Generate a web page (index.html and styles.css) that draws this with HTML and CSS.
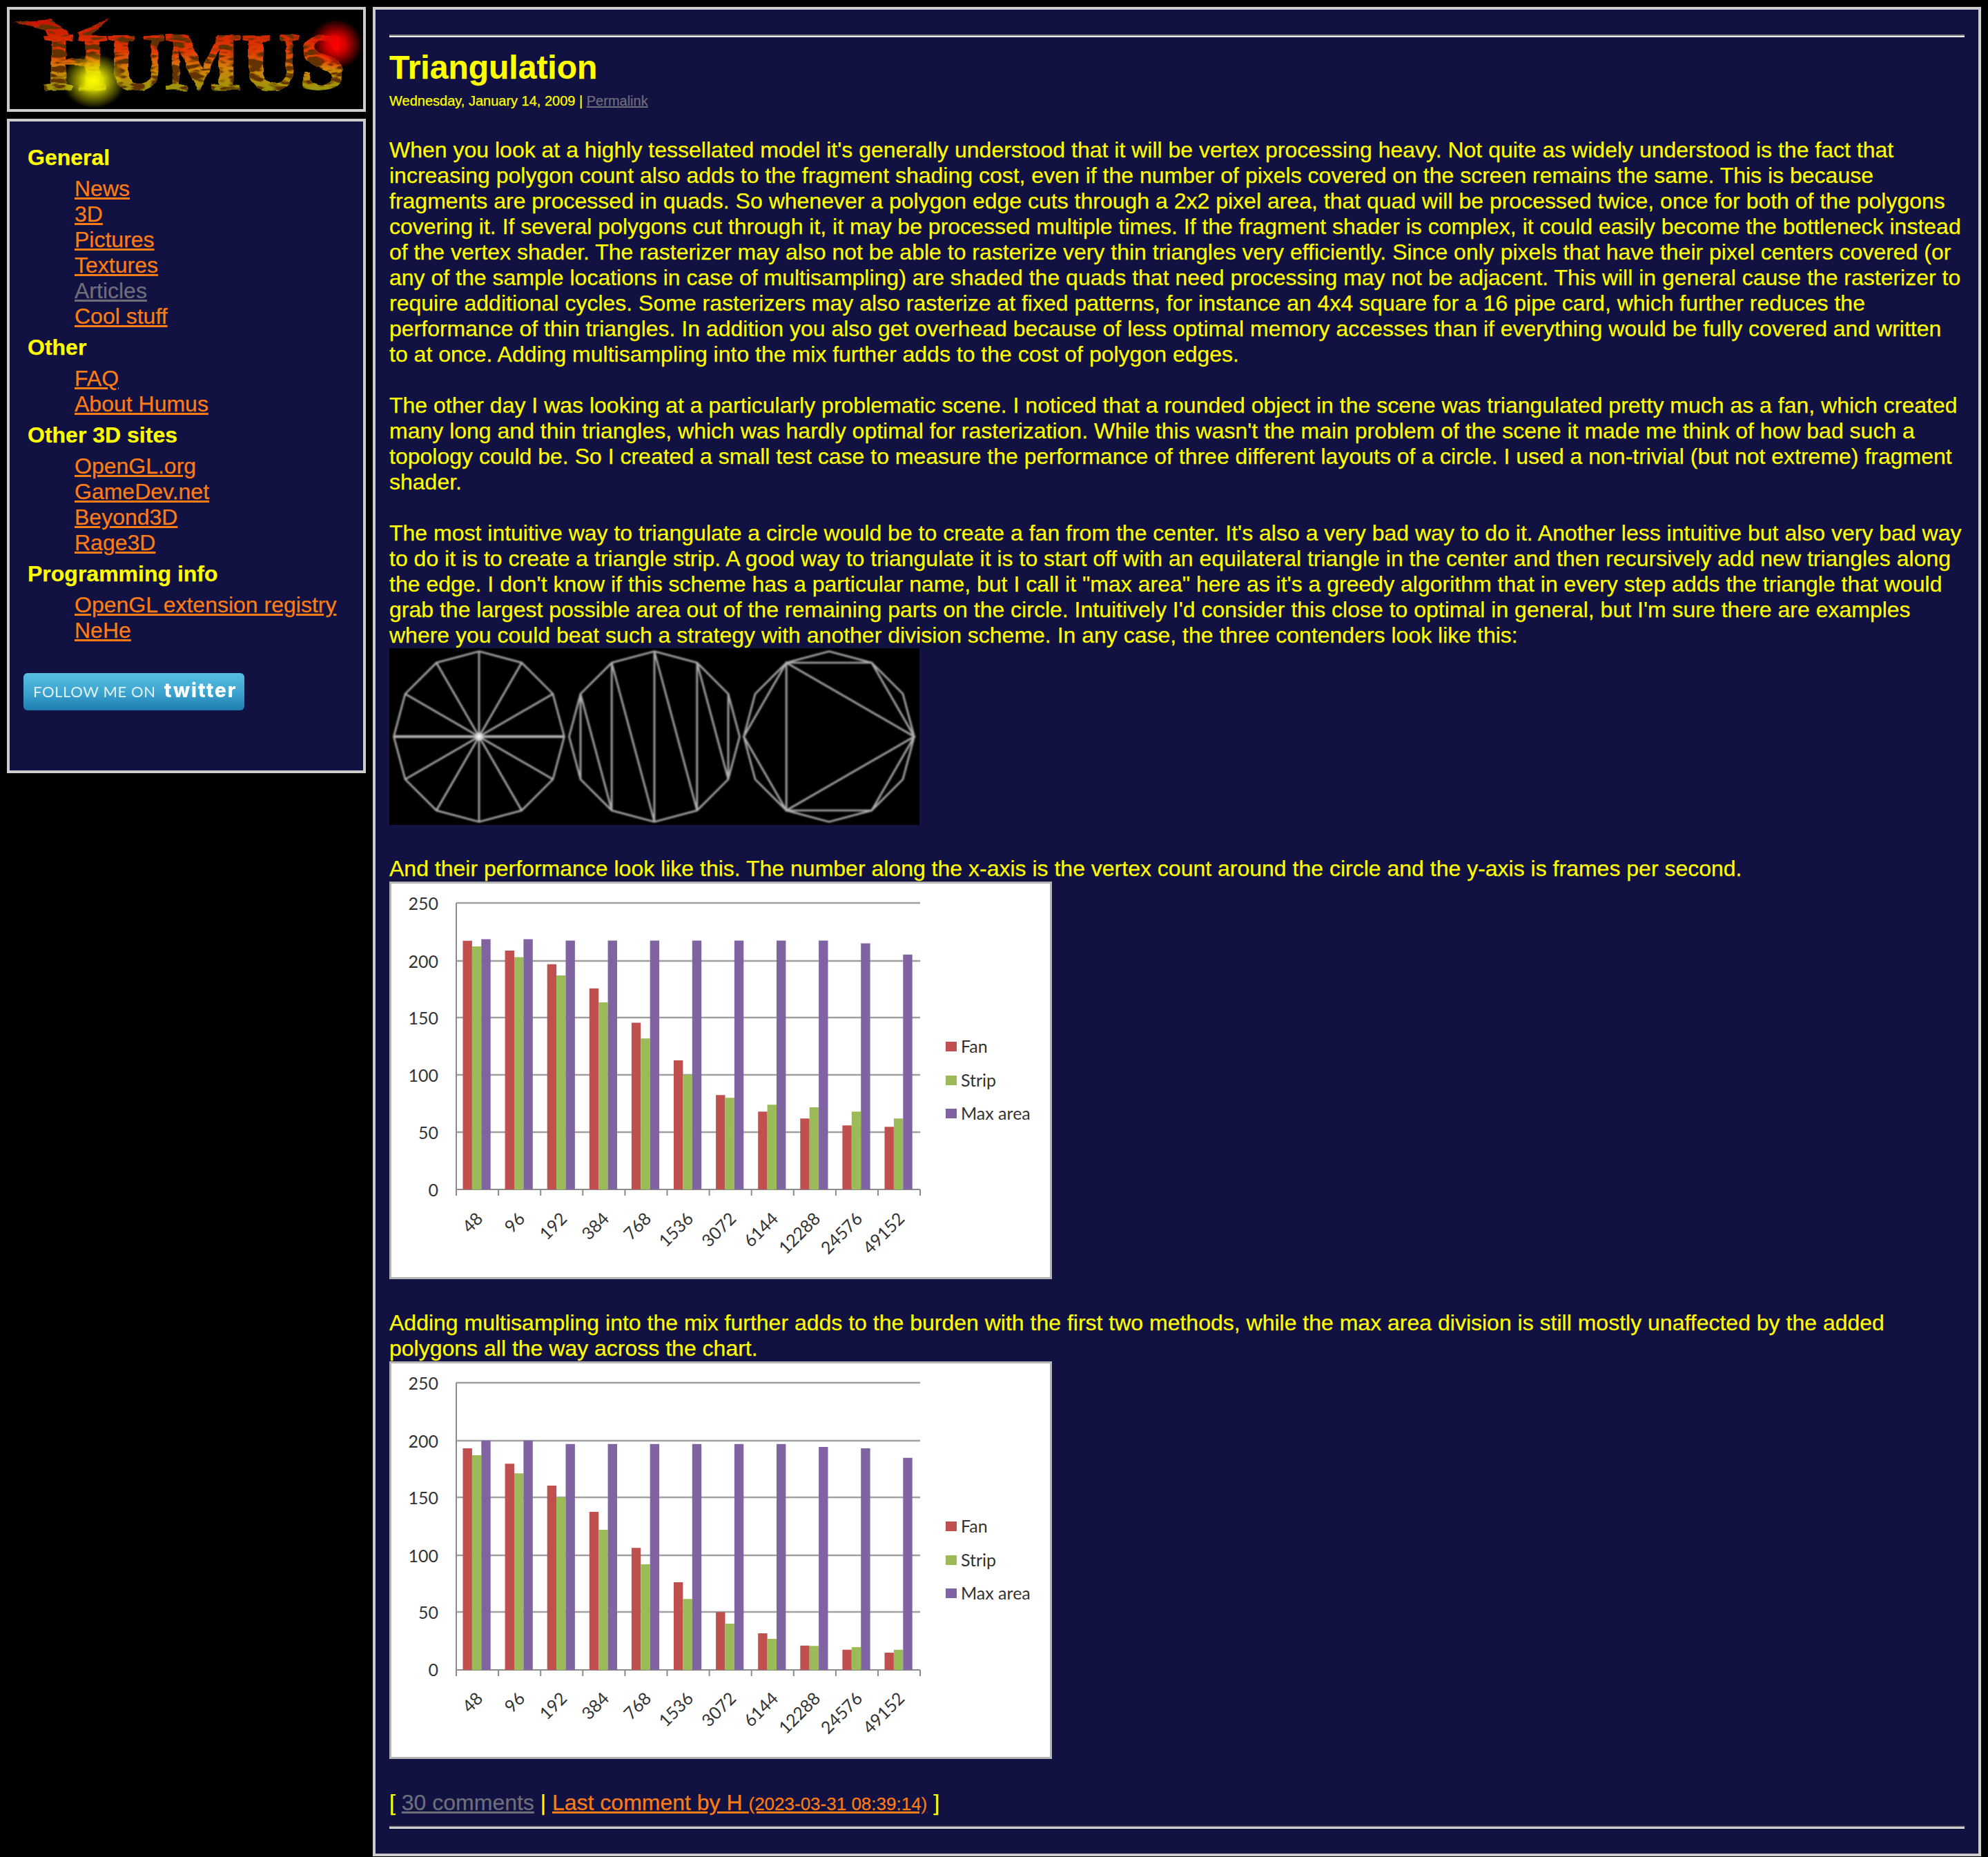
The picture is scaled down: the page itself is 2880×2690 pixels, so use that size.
FILE: index.html
```html
<!DOCTYPE html>
<html lang="en">
<head>
<meta charset="utf-8">
<title>Humus - Triangulation</title>
<link rel="stylesheet" href="styles.css">
</head>
<body>
<div class="page">
  <aside class="side">
    <div class="box logo-box">
      <svg class="logo" viewBox="0 0 512 144" role="img" aria-label="Humus">
        <defs>
          <linearGradient id="logoFill" gradientUnits="userSpaceOnUse" x1="0" y1="20" x2="0" y2="122">
            <stop offset="0" stop-color="#c81804"/>
            <stop offset=".4" stop-color="#e23c06"/>
            <stop offset=".65" stop-color="#d48408"/>
            <stop offset="1" stop-color="#8c9a10"/>
          </linearGradient>
          <radialGradient id="glowRed">
            <stop offset="0" stop-color="#ff0000"/>
            <stop offset=".35" stop-color="#f80000" stop-opacity=".85"/>
            <stop offset="1" stop-color="#ff0000" stop-opacity="0"/>
          </radialGradient>
          <radialGradient id="glowYellow">
            <stop offset="0" stop-color="#ffff00"/>
            <stop offset=".28" stop-color="#f4f400" stop-opacity=".9"/>
            <stop offset="1" stop-color="#e8e800" stop-opacity="0"/>
          </radialGradient>
          <filter id="rough" x="-5%" y="-15%" width="110%" height="130%">
            <feTurbulence type="fractalNoise" baseFrequency=".04 .07" numOctaves="3" seed="7" result="n"/>
            <feDisplacementMap in="SourceGraphic" in2="n" scale="6" xChannelSelector="R" yChannelSelector="G" result="d"/>
            <feTurbulence type="turbulence" baseFrequency=".035 .1" numOctaves="2" seed="3" result="v"/>
            <feColorMatrix in="v" type="matrix" values="0 0 0 0 .12  0 0 0 0 .03  0 0 0 0 0  5 0 0 0 -.85" result="veins"/>
            <feComposite in="veins" in2="d" operator="in" result="dark"/>
            <feMerge><feMergeNode in="d"/><feMergeNode in="dark"/></feMerge>
          </filter>
        </defs>
        <rect width="512" height="144" fill="#000"/>
        <g filter="url(#rough)">
          <path d="M5 18 60 14 82 32 92 46 60 46 52 30Z" fill="url(#logoFill)"/>
          <path d="M143 13 110 46 98 34Z" fill="url(#logoFill)"/>
          <text class="logo-text" x="50" y="115" fill="url(#logoFill)" stroke="url(#logoFill)">HUMUS</text>
        </g>
        <ellipse cx="473" cy="50" rx="38" ry="36" fill="url(#glowRed)"/>
        <ellipse cx="122" cy="103" rx="46" ry="40" fill="url(#glowYellow)"/>
      </svg>
    </div>
    <nav class="box nav">
      <h2 class="nav-head">General</h2>
      <ul class="nav-list">
        <li><a href="#news">News</a></li>
        <li><a href="#3d">3D</a></li>
        <li><a href="#pictures">Pictures</a></li>
        <li><a href="#textures">Textures</a></li>
        <li><a class="seen" href="#articles">Articles</a></li>
        <li><a href="#cool">Cool stuff</a></li>
      </ul>
      <h2 class="nav-head">Other</h2>
      <ul class="nav-list">
        <li><a href="#faq">FAQ</a></li>
        <li><a href="#about">About Humus</a></li>
      </ul>
      <h2 class="nav-head">Other 3D sites</h2>
      <ul class="nav-list">
        <li><a href="#opengl">OpenGL.org</a></li>
        <li><a href="#gamedev">GameDev.net</a></li>
        <li><a href="#beyond3d">Beyond3D</a></li>
        <li><a href="#rage3d">Rage3D</a></li>
      </ul>
      <h2 class="nav-head">Programming info</h2>
      <ul class="nav-list">
        <li><a href="#registry">OpenGL extension registry</a></li>
        <li><a href="#nehe">NeHe</a></li>
      </ul>
      <a class="twitter" href="#twitter"><span class="tw-follow">FOLLOW ME ON</span><span class="tw-name">twitter</span></a>
    </nav>
  </aside>

  <main class="box article">
    <hr class="rule">
    <h1 class="title">Triangulation</h1>
    <div class="meta">Wednesday, January 14, 2009 | <a class="seen" href="#permalink">Permalink</a></div>
    <div class="body-text">
      When you look at a highly tessellated model it's generally understood that it will be vertex processing heavy. Not quite as widely understood is the fact that increasing polygon count also adds to the fragment shading cost, even if the number of pixels covered on the screen remains the same. This is because fragments are processed in quads. So whenever a polygon edge cuts through a 2x2 pixel area, that quad will be processed twice, once for both of the polygons covering it. If several polygons cut through it, it may be processed multiple times. If the fragment shader is complex, it could easily become the bottleneck instead of the vertex shader. The rasterizer may also not be able to rasterize very thin triangles very efficiently. Since only pixels that have their pixel centers covered (or any of the sample locations in case of multisampling) are shaded the quads that need processing may not be adjacent. This will in general cause the rasterizer to require additional cycles. Some rasterizers may also rasterize at fixed patterns, for instance an 4x4 square for a 16 pipe card, which further reduces the performance of thin triangles. In addition you also get overhead because of less optimal memory accesses than if everything would be fully covered and written to at once. Adding multisampling into the mix further adds to the cost of polygon edges.<br><br>
      The other day I was looking at a particularly problematic scene. I noticed that a rounded object in the scene was triangulated pretty much as a fan, which created many long and thin triangles, which was hardly optimal for rasterization. While this wasn't the main problem of the scene it made me think of how bad such a topology could be. So I created a small test case to measure the performance of three different layouts of a circle. I used a non-trivial (but not extreme) fragment shader.<br><br>
      The most intuitive way to triangulate a circle would be to create a fan from the center. It's also a very bad way to do it. Another less intuitive but also very bad way to do it is to create a triangle strip. A good way to triangulate it is to start off with an equilateral triangle in the center and then recursively add new triangles along the edge. I don't know if this scheme has a particular name, but I call it "max area" here as it's a greedy algorithm that in every step adds the triangle that would grab the largest possible area out of the remaining parts on the circle. Intuitively I'd consider this close to optimal in general, but I'm sure there are examples where you could beat such a strategy with another division scheme. In any case, the three contenders look like this:<br>
      <svg class="figure wire" viewBox="0 0 768 256" role="img" aria-label="Fan, strip and max area triangulations of a circle">
        <defs>
          <polygon id="gon" points="0,-123.5 61.8,-107 107,-61.8 123.5,0 107,61.8 61.8,107 0,123.5 -61.8,107 -107,61.8 -123.5,0 -107,-61.8 -61.8,-107"/>
          <filter id="soft" x="-2%" y="-2%" width="104%" height="104%"><feGaussianBlur stdDeviation=".8"/></filter>
          <radialGradient id="hub"><stop offset="0" stop-color="#fff"/><stop offset="1" stop-color="#fff" stop-opacity="0"/></radialGradient>
        </defs>
        <rect width="768" height="256" fill="#000"/>
        <g class="wire-lines" filter="url(#soft)">
          <g transform="translate(130 128)">
            <use href="#gon"/>
            <path d="M0-123.5V123.5M61.8-107-61.8 107M107-61.8-107 61.8M123.5 0H-123.5M107 61.8-107-61.8M61.8 107-61.8-107"/>
            <path class="wire-bold" d="M123.5 0H-123.5"/>
          </g>
          <g transform="translate(384 128)">
            <use href="#gon"/>
            <path d="M107-61.8V61.8L61.8-107V107L0-123.5V123.5L-61.8-107V107L-107-61.8V61.8"/>
          </g>
          <g transform="translate(637 128)">
            <use href="#gon"/>
            <path d="M-61.8-107V107L123.5 0ZM-61.8-107H61.8L123.5 0L61.8 107H-61.8L-123.5 0Z"/>
          </g>
        </g>
        <circle cx="130" cy="128" r="7" fill="url(#hub)"/>
      </svg><br><br>
      And their performance look like this. The number along the x-axis is the vertex count around the circle and the y-axis is frames per second.<br>
      <svg class="figure chart" viewBox="0 0 960 576" role="img" aria-label="Frames per second without multisampling">
        <rect class="chart-frame" x="1.500" y="1.500" width="957" height="573"/>
        <path class="grid" d="M97 31H769M97 115H769M97 197H769M97 280H769M97 363H769"/>
        <path class="axis" d="M97 31V446H769M97 446v9M158.100 446v9M219.200 446v9M280.300 446v9M341.400 446v9M402.500 446v9M463.600 446v9M524.700 446v9M585.800 446v9M646.900 446v9M708 446v9M769 446v9"/>
        <path class="bar fan" d="M113.200 446V85.800M174.300 446V99.900M235.400 446V119.800M296.500 446V154.700M357.600 446V204.500M418.700 446V258.900M479.800 446V309.200M540.900 446V333.300M602 446V343.200M663.100 446V353.200M724.200 446V355.200"/>
        <path class="bar strip" d="M126.600 446V94.100M187.700 446V109.500M248.800 446V135.900M309.900 446V175.100M371 446V227.200M432.100 446V280M493.200 446V313.200M554.300 446V323.200M615.400 446V327.100M676.500 446V333.300M737.600 446V343.200"/>
        <path class="bar maxarea" d="M140 446V83.500M201.100 446V83.500M262.200 446V85.400M323.300 446V85.400M384.400 446V85.400M445.500 446V85.400M506.600 446V85.400M567.700 446V85.400M628.800 446V85.400M689.900 446V89.600M751 446V105.700"/>
        <g class="y-labels">
          <text x="71" y="41">250</text><text x="71" y="125">200</text><text x="71" y="207">150</text><text x="71" y="290">100</text><text x="71" y="373">50</text><text x="71" y="456">0</text>
        </g>
        <g class="x-labels">
          <text transform="translate(137 490) rotate(-45)">48</text><text transform="translate(198 490) rotate(-45)">96</text><text transform="translate(259 490) rotate(-45)">192</text><text transform="translate(320 490) rotate(-45)">384</text><text transform="translate(381 490) rotate(-45)">768</text><text transform="translate(442 490) rotate(-45)">1536</text><text transform="translate(504 490) rotate(-45)">3072</text><text transform="translate(565 490) rotate(-45)">6144</text><text transform="translate(626 490) rotate(-45)">12288</text><text transform="translate(687 490) rotate(-45)">24576</text><text transform="translate(748 490) rotate(-45)">49152</text>
        </g>
        <rect class="swatch fan-fill" x="806" y="232" width="16" height="14"/>
        <rect class="swatch strip-fill" x="806" y="281" width="16" height="14"/>
        <rect class="swatch max-fill" x="806" y="329" width="16" height="14"/>
        <g class="legend"><text x="828" y="248">Fan</text><text x="828" y="297">Strip</text><text x="828" y="345">Max area</text></g>
      </svg><br><br>
      Adding multisampling into the mix further adds to the burden with the first two methods, while the max area division is still mostly unaffected by the added polygons all the way across the chart.<br>
      <svg class="figure chart" viewBox="0 0 960 576" role="img" aria-label="Frames per second with multisampling">
        <rect class="chart-frame" x="1.500" y="1.500" width="957" height="573"/>
        <path class="grid" d="M97 31H769M97 115H769M97 197H769M97 281H769M97 363H769"/>
        <path class="axis" d="M97 31V447H769M97 447v9M158.100 447v9M219.200 447v9M280.300 447v9M341.400 447v9M402.500 447v9M463.600 447v9M524.700 447v9M585.800 447v9M646.900 447v9M708 447v9M769 447v9"/>
        <path class="bar fan" d="M113.200 447V125.900M174.300 447V148.200M235.400 447V179.900M296.500 447V218M357.600 447V270.200M418.700 447V320M479.800 447V363.300M540.900 447V394M602 447V411.700M663.100 447V417.800M724.200 447V422"/>
        <path class="bar strip" d="M126.600 447V136.100M187.700 447V162.200M248.800 447V197.100M309.900 447V244.100M371 447V293.900M432.100 447V344.200M493.200 447V380.100M554.300 447V402M615.400 447V412.200M676.500 447V414M737.600 447V417.800"/>
        <path class="bar maxarea" d="M140 447V114.700M201.100 447V114.700M262.200 447V119.800M323.300 447V119.800M384.400 447V119.800M445.500 447V119.800M506.600 447V119.800M567.700 447V119.800M628.800 447V124M689.900 447V125.900M751 447V139.800"/>
        <g class="y-labels">
          <text x="71" y="41">250</text><text x="71" y="125">200</text><text x="71" y="207">150</text><text x="71" y="291">100</text><text x="71" y="373">50</text><text x="71" y="456">0</text>
        </g>
        <g class="x-labels">
          <text transform="translate(137 490) rotate(-45)">48</text><text transform="translate(198 490) rotate(-45)">96</text><text transform="translate(259 490) rotate(-45)">192</text><text transform="translate(320 490) rotate(-45)">384</text><text transform="translate(381 490) rotate(-45)">768</text><text transform="translate(442 490) rotate(-45)">1536</text><text transform="translate(504 490) rotate(-45)">3072</text><text transform="translate(565 490) rotate(-45)">6144</text><text transform="translate(626 490) rotate(-45)">12288</text><text transform="translate(687 490) rotate(-45)">24576</text><text transform="translate(748 490) rotate(-45)">49152</text>
        </g>
        <rect class="swatch fan-fill" x="806" y="232" width="16" height="14"/>
        <rect class="swatch strip-fill" x="806" y="281" width="16" height="14"/>
        <rect class="swatch max-fill" x="806" y="329" width="16" height="14"/>
        <g class="legend"><text x="828" y="248">Fan</text><text x="828" y="297">Strip</text><text x="828" y="345">Max area</text></g>
      </svg><br><br>
      [ <a class="seen" href="#comments">30 comments</a> | <a href="#last">Last comment by H <small class="stamp">(2023-03-31 08:39:14)</small></a> ]
    </div>
    <hr class="rule rule-end">
  </main>
</div>
</body>
</html>
```
FILE: styles.css
```css
html, body {
  margin: 0;
  padding: 0;
  background: #000;
}
body {
  font-family: "Liberation Sans", Arial, sans-serif;
  font-size: 32px;
  line-height: 37px;
  color: #ffff00;
  -webkit-text-stroke: .25px currentColor;
}
.page {
  display: flex;
  align-items: flex-start;
  gap: 10px;
  padding: 10px 10px 2px;
}
.box {
  box-sizing: border-box;
  border: 4px solid #cccccc;
  background: #111142;
}
a {
  color: #fc7c16;
}
a.seen {
  color: #6e6e7a;
}
.side {
  flex: 0 0 520px;
  display: flex;
  flex-direction: column;
  gap: 10px;
}
.logo-box {
  height: 152px;
  background: #000;
}
.logo {
  display: block;
  width: 512px;
  height: 144px;
}
.logo-text {
  font-family: "Liberation Serif", serif;
  font-weight: bold;
  font-size: 117px;
  stroke-width: 3px;
}
.nav {
  height: 948px;
  padding: 34px 20px 0 26px;
}
.nav-head {
  margin: 0 0 8px;
  font-size: 32px;
  line-height: 37px;
  font-weight: bold;
}
.nav-list {
  list-style: none;
  margin: 0 0 8px;
  padding: 0 0 0 68px;
}
.twitter {
  display: flex;
  align-items: center;
  width: 320px;
  height: 54px;
  margin: 43px 0 0 -6px;
  box-sizing: border-box;
  padding-left: 14px;
  border-radius: 6px;
  background: linear-gradient(#56c0e2, #3ea5d0 50%, #1c7eb0);
  color: #e0f2f8;
  text-decoration: none;
  -webkit-text-stroke: 0;
}
.tw-follow {
  font-family: Lato, sans-serif;
  font-size: 22px;
  line-height: 30px;
  letter-spacing: .6px;
  filter: blur(.4px);
}
.tw-name {
  margin: -5px 0 0 12px;
  font-family: Inter, sans-serif;
  font-size: 28px;
  line-height: 30px;
  font-weight: 800;
  letter-spacing: 2px;
  color: #ffffff;
  filter: blur(.4px);
}
.article {
  flex: 1 1 auto;
  min-width: 0;
  padding: 20px;
}
.rule {
  height: 0;
  margin: 16px 0;
  border: 0;
  border-top: 2px solid #808080;
  border-bottom: 2px solid #eeeeee;
}
.rule-end {
  margin-top: 15px;
}
.title {
  margin: 0 0 10px;
  font-size: 48px;
  line-height: 55px;
  font-weight: bold;
}
.meta {
  margin-bottom: 41px;
  font-size: 20px;
  line-height: 23px;
}
.figure {
  display: inline-block;
  -webkit-text-stroke: 0;
}
.wire {
  width: 768px;
  height: 256px;
}
.wire-lines {
  fill: none;
  stroke: #b0b0b0;
  stroke-width: 2.6;
}
.wire-bold {
  stroke-width: 4;
}
.chart {
  width: 960px;
  height: 576px;
}
.chart-frame {
  fill: #fff;
  stroke: #b4b4b4;
  stroke-width: 3;
}
.grid {
  fill: none;
  stroke: #a0a0a0;
  stroke-width: 2.4;
}
.axis {
  fill: none;
  stroke: #8c8c8c;
  stroke-width: 2;
}
.bar {
  fill: none;
  stroke-width: 13.4;
}
.fan { stroke: #c0504d; }
.strip { stroke: #9bbb59; }
.maxarea { stroke: #8064a2; }
.fan-fill { fill: #c0504d; }
.strip-fill { fill: #9bbb59; }
.max-fill { fill: #8064a2; }
.y-labels, .x-labels, .legend {
  font-family: Lato, sans-serif;
  font-size: 25px;
  fill: #333333;
}
.y-labels { text-anchor: end; }
.x-labels { text-anchor: end; }
.stamp {
  font-size: 26px;
  line-height: 1;
}
```
